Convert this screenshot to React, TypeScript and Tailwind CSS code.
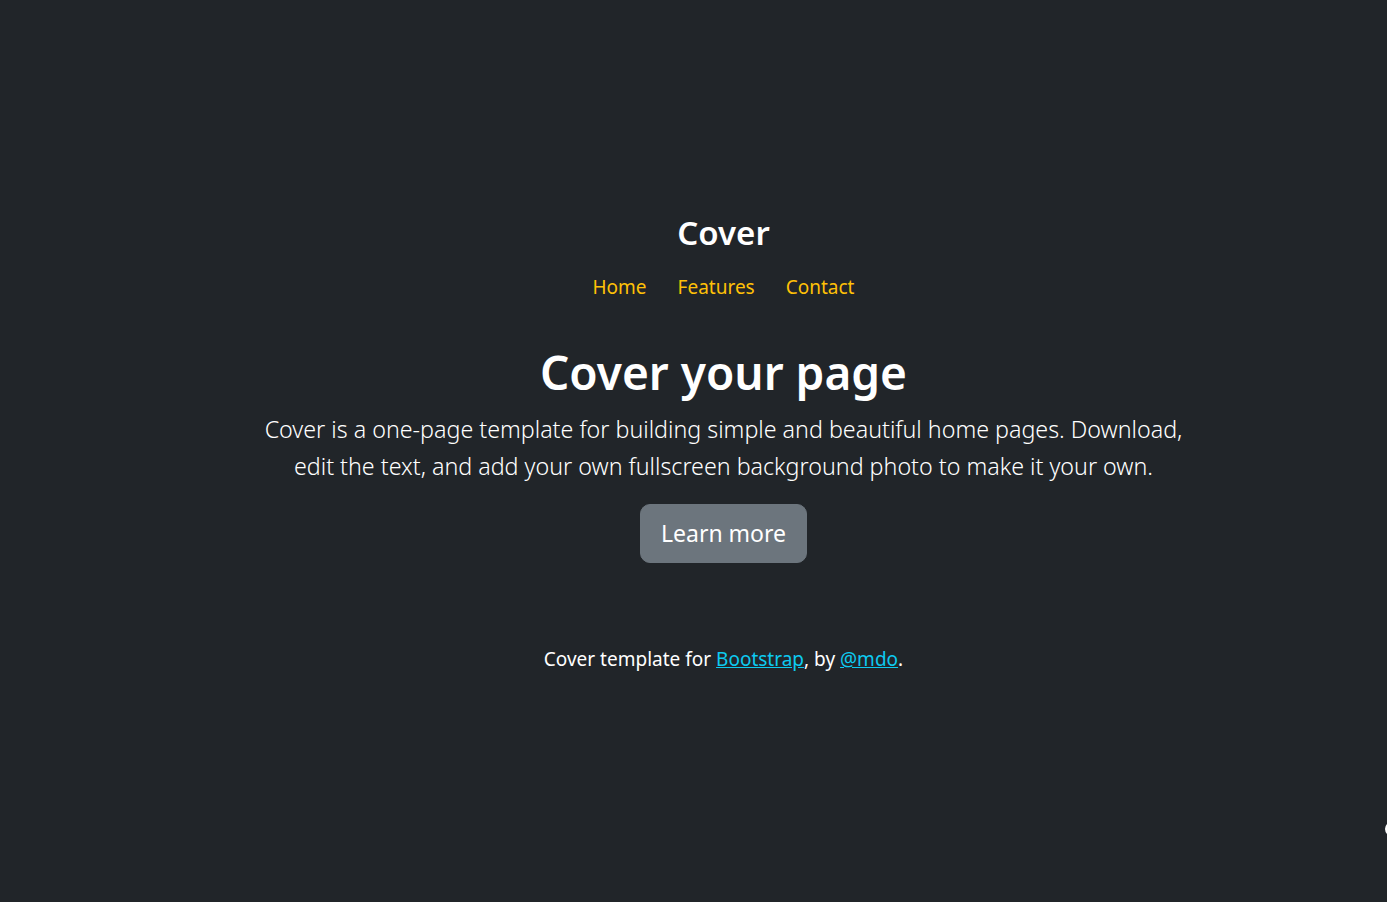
import React from "react";

const font = "font-['Noto_Sans','Open_Sans',sans-serif]";

const App = () => {
  return (
    <div
      className={`relative min-h-screen w-full overflow-hidden bg-[#212529] text-white flex flex-col items-center text-center pl-[60px] ${font}`}
    >
      {/* Header */}
      <header className="pt-[211px] flex flex-col items-center">
        <h3 className="text-[33px] leading-[44px] font-semibold">Cover</h3>
        <nav className="mt-[17px] flex gap-[31px] text-[19px] leading-[30px] text-[#ffc107]">
          <a href="#">Home</a>
          <a href="#">Features</a>
          <a href="#">Contact</a>
        </nav>
      </header>

      {/* Main */}
      <main className="mt-[43px] flex flex-col items-center">
        <h1 className="text-[46px] leading-[55px] font-semibold">Cover your page</h1>
        <p className="mt-[11px] text-[23.25px] leading-[37px] font-light">
          Cover is a one-page template for building simple and beautiful home pages. Download,
          <br />
          edit the text, and add your own fullscreen background photo to make it your own.
        </p>
        <button className="mt-[19px] h-[59px] px-[20px] rounded-[10px] bg-[#6c757d] border border-[#6c757d] text-[23px] leading-[37px] text-white">
          Learn more
        </button>
      </main>

      {/* Footer */}
      <footer className="mt-[81px] text-[19px] leading-[30px]">
        Cover template for{" "}
        <a href="#" className="text-[#0dcaf0] underline">
          Bootstrap
        </a>
        , by{" "}
        <a href="#" className="text-[#0dcaf0] underline">
          @mdo
        </a>
        .
      </footer>

      <div className="absolute right-[-12px] top-[822px] w-[14px] h-[14px] rounded-full bg-white" />
    </div>
  );
};

export default App;
